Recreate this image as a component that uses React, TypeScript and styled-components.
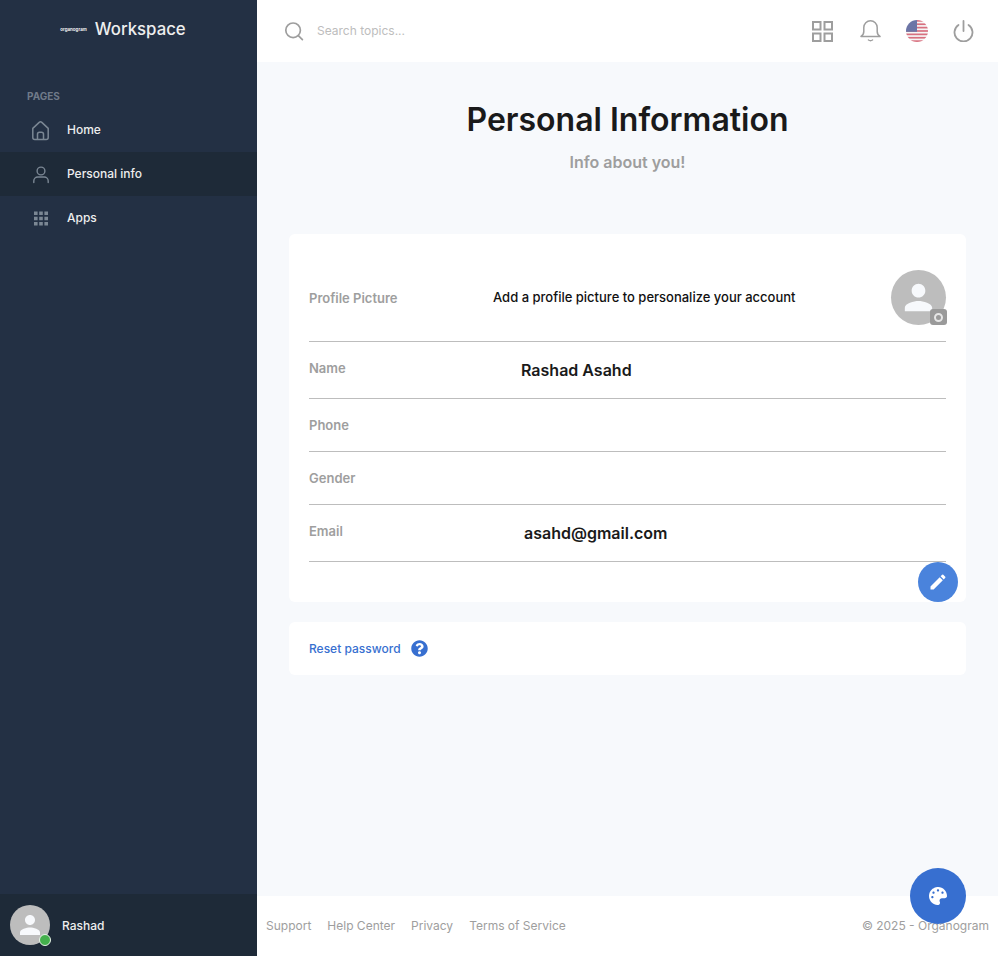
import styled, { createGlobalStyle } from "styled-components";
import { FaPalette, FaQuestionCircle } from "react-icons/fa";

const personPath =
  "M12 12c2.21 0 4-1.79 4-4s-1.79-4-4-4-4 1.79-4 4 1.79 4 4 4zm0 2c-2.67 0-8 1.34-8 4v2h16v-2c0-2.66-5.33-4-8-4z";
const editPath =
  "M3 17.25V21h3.75L17.81 9.94l-3.75-3.75L3 17.25zM20.71 7.04c.39-.39.39-1.02 0-1.41l-2.34-2.34a.9959.9959 0 0 0-1.41 0l-1.83 1.83 3.75 3.75 1.83-1.83z";

const GlobalStyle = createGlobalStyle`
  html, body {
    margin: 0;
    padding: 0;
    height: 100%;
    font-family: Inter, "Liberation Sans", sans-serif;
  }
  #root {
    height: 100%;
  }
`;

const Shell = styled.div`
  display: flex;
  height: 956px;
  overflow: hidden;
  position: relative;
  background: #f7f9fc;
`;

const Sidebar = styled.aside`
  width: 257px;
  flex-shrink: 0;
  display: flex;
  flex-direction: column;
  background: #233044;
  color: #eeeeee;
`;

const Brand = styled.div`
  height: 57px;
  display: flex;
  align-items: center;
  justify-content: center;
  gap: 8px;
  padding-right: 11px;
`;

const BrandMark = styled.span`
  font-size: 4.5px;
  font-weight: 600;
  color: #ffffff;
  white-space: nowrap;
  margin-top: 2px;
`;

const BrandName = styled.span`
  font-size: 16.8px;
  font-weight: 500;
  color: #eeeeee;
`;

const NavSection = styled.nav`
  flex: 1;
  padding-top: 33px;
`;

const NavLabel = styled.div`
  font-size: 10px;
  font-weight: 700;
  line-height: 12px;
  color: #6f7a89;
  padding: 0 27px;
  margin-bottom: 6px;
`;

const NavItem = styled.a<{ $active?: boolean }>`
  height: 44px;
  display: flex;
  align-items: center;
  gap: 16px;
  padding-left: 30px;
  font-size: 12px;
  font-weight: 500;
  color: #eeeeee;
  background: ${({ $active }) => ($active ? "#1e2a38" : "transparent")};

  svg {
    flex-shrink: 0;
    color: #7b8794;
  }
`;

const NavText = styled.span`
  margin-bottom: 2px;
`;

const UserBar = styled.div`
  height: 62px;
  display: flex;
  align-items: center;
  gap: 12px;
  padding-left: 10px;
  background: #1e2a38;
  font-size: 12px;
  font-weight: 500;
`;

const Avatar = styled.div<{ $size: number }>`
  position: relative;
  width: ${({ $size }) => $size}px;
  height: ${({ $size }) => $size}px;
  flex-shrink: 0;
  border-radius: 50%;
  background: #bdbdbd;
  display: flex;
  align-items: center;
  justify-content: center;
  color: #f7f9fc;
`;

const StatusDot = styled.span`
  position: absolute;
  right: -1px;
  bottom: -1px;
  width: 10px;
  height: 10px;
  border-radius: 50%;
  background: #44b04c;
  border: 1px solid #e8f3e8;
`;

const CameraBadge = styled.span`
  position: absolute;
  right: -1px;
  bottom: 0;
  width: 17px;
  height: 16px;
  border-radius: 3px;
  background: #9a9a9a;
  display: flex;
  align-items: center;
  justify-content: center;
`;

const CameraLens = styled.span`
  width: 9px;
  height: 9px;
  border-radius: 50%;
  border: 2px solid #e6e6e6;
  box-sizing: border-box;
`;

const Main = styled.div`
  flex: 1;
  min-width: 0;
  display: flex;
  flex-direction: column;
`;

const Header = styled.header`
  height: 62px;
  flex-shrink: 0;
  display: flex;
  align-items: center;
  background: #ffffff;
  padding: 0 12px 0 27px;
`;

const SearchBox = styled.div`
  flex: 1;
  display: flex;
  align-items: center;
  gap: 12px;
  font-size: 12px;
  color: #bdbdbd;
  svg {
    color: #9e9e9e;
  }
`;

const SearchText = styled.span`
  margin-bottom: 2px;
`;

const HeaderIcons = styled.div`
  display: flex;
  align-items: center;
  color: #9e9e9e;
`;

const HeaderSlot = styled.span<{ $width: number }>`
  width: ${({ $width }) => $width}px;
  display: flex;
  justify-content: center;
`;

const Content = styled.main`
  flex: 1;
  padding: 38px 32px 0;
`;

const PageTitle = styled.h1`
  margin: 0;
  text-align: center;
  font-size: 32px;
  line-height: 39px;
  font-weight: 600;
  color: #1a1a1a;
`;

const PageSubtitle = styled.p`
  margin: 13px 0 62px;
  text-align: center;
  font-size: 16px;
  line-height: 20px;
  font-weight: 600;
  color: #9e9e9e;
`;

const InfoCard = styled.section`
  position: relative;
  background: #ffffff;
  border-radius: 6px;
  padding: 36px 20px 40px;
`;

const Row = styled.div<{ $picture?: boolean }>`
  display: flex;
  align-items: ${({ $picture }) => ($picture ? "center" : "flex-start")};
  padding: ${({ $picture }) => ($picture ? "0 0 16px" : "17px 0")};
  border-bottom: 1px solid #bdbdbd;
`;

const RowLabel = styled.div`
  width: 184px;
  flex-shrink: 0;
  font-size: 13px;
  line-height: 18px;
  font-weight: 600;
  color: #9e9e9e;
`;

const Hint = styled.div`
  flex: 1;
  font-size: 13px;
  font-weight: 500;
  color: #111111;
  margin-top: -2px;
`;

const RowValue = styled.div<{ $indent: number }>`
  padding-left: ${({ $indent }) => $indent}px;
  font-size: 16px;
  line-height: 22px;
  font-weight: 600;
  color: #1a1a1a;
`;

const EditButton = styled.button`
  position: absolute;
  right: 8px;
  bottom: 0;
  width: 40px;
  height: 40px;
  padding: 0;
  border: 0;
  border-radius: 50%;
  background: #4a83dc;
  color: #ffffff;
  display: flex;
  align-items: center;
  justify-content: center;
`;

const ResetCard = styled.section`
  margin-top: 20px;
  height: 53px;
  display: flex;
  align-items: center;
  gap: 10px;
  padding: 0 20px;
  background: #ffffff;
  border-radius: 6px;
  color: #376fd0;
`;

const ResetLink = styled.a`
  font-size: 12px;
  font-weight: 500;
  color: #376fd0;
`;

const Footer = styled.footer`
  height: 60px;
  box-sizing: border-box;
  flex-shrink: 0;
  display: flex;
  align-items: center;
  justify-content: space-between;
  padding: 0 9px 2px;
  background: #ffffff;
  font-size: 12px;
  color: #9e9e9e;
`;

const FooterLinks = styled.div`
  display: flex;
  gap: 16px;
`;

const ThemeButton = styled.button`
  position: absolute;
  right: 32px;
  bottom: 32px;
  width: 56px;
  height: 56px;
  padding: 0;
  border: 0;
  border-radius: 50%;
  background: #376fd0;
  color: #ffffff;
  display: flex;
  align-items: center;
  justify-content: center;
`;

function PersonIcon({ size }: { size: number }) {
  return (
    <svg width={size} height={size} viewBox="0 0 24 24" fill="currentColor">
      <path d={personPath} />
    </svg>
  );
}

function Flag() {
  const stripes = [0, 1, 2, 3, 4, 5, 6];
  return (
    <svg width="22" height="22" viewBox="0 0 22 22">
      <defs>
        <clipPath id="flag-clip">
          <circle cx="11" cy="11" r="11" />
        </clipPath>
      </defs>
      <g clipPath="url(#flag-clip)" opacity="0.7">
        <rect width="22" height="22" fill="#f2f2f2" />
        {stripes.map((s) => (
          <rect key={s} y={s * 3.38} width="22" height="1.69" fill="#c8344a" />
        ))}
        <rect width="11" height="11.8" fill="#2e3b80" />
      </g>
    </svg>
  );
}

export default function App() {
  return (
    <>
      <GlobalStyle />
      <Shell>
        <Sidebar>
          <Brand>
            <BrandMark>organogram</BrandMark>
            <BrandName>Workspace</BrandName>
          </Brand>
          <NavSection>
            <NavLabel>PAGES</NavLabel>
            <NavItem>
              <svg width="21" height="21" viewBox="0 0 21 21" fill="none" stroke="currentColor" strokeWidth="1.5" strokeLinejoin="round">
                <path d="M2.8 8.4 9.2 2.4a2 2 0 0 1 2.6 0l6.4 6V17.4a2 2 0 0 1-2 2H4.8a2 2 0 0 1-2-2z" />
                <path d="M7.5 19.4v-5.2a2 2 0 0 1 2-2h2a2 2 0 0 1 2 2v5.2" />
              </svg>
              <NavText>Home</NavText>
            </NavItem>
            <NavItem $active>
              <svg width="21" height="21" viewBox="0 0 21 21" fill="none" stroke="currentColor" strokeWidth="1.4" strokeLinecap="round">
                <circle cx="11" cy="7" r="3.9" />
                <path d="M3.8 18.5v-1.5a4 4 0 0 1 4-4h6.4a4 4 0 0 1 4 4v1.5" />
              </svg>
              <NavText>Personal info</NavText>
            </NavItem>
            <NavItem>
              <svg width="21" height="21" viewBox="0 0 21 21" fill="currentColor">
                <path d="M4 3.5h3.6v3.6H4zM9.2 3.5h3.6v3.6H9.2zM14.4 3.5h3.6v3.6h-3.6zM4 8.7h3.6v3.6H4zM9.2 8.7h3.6v3.6H9.2zM14.4 8.7h3.6v3.6h-3.6zM4 13.9h3.6v3.6H4zM9.2 13.9h3.6v3.6H9.2zM14.4 13.9h3.6v3.6h-3.6z" />
              </svg>
              <NavText>Apps</NavText>
            </NavItem>
          </NavSection>
          <UserBar>
            <Avatar $size={40}>
              <PersonIcon size={30} />
              <StatusDot />
            </Avatar>
            Rashad
          </UserBar>
        </Sidebar>

        <Main>
          <Header>
            <SearchBox>
              <svg width="21" height="21" viewBox="0 0 21 21" fill="none" stroke="currentColor" strokeWidth="1.7" strokeLinecap="round">
                <circle cx="9.1" cy="9.3" r="7.3" />
                <path d="m14.6 14.8 3.8 3.9" />
              </svg>
              <SearchText>Search topics...</SearchText>
            </SearchBox>
            <HeaderIcons>
              <HeaderSlot $width={48}>
                <svg width="21" height="21" viewBox="0 0 21 21" fill="none" stroke="currentColor" strokeWidth="2">
                  <rect x="1" y="1" width="7.5" height="7.5" />
                  <rect x="12.5" y="1" width="7.5" height="7.5" />
                  <rect x="1" y="12.5" width="7.5" height="7.5" />
                  <rect x="12.5" y="12.5" width="7.5" height="7.5" />
                </svg>
              </HeaderSlot>
              <HeaderSlot $width={48}>
                <svg width="21" height="22" viewBox="0 0 21 22" fill="none" stroke="currentColor" strokeWidth="1.5" strokeLinecap="round" strokeLinejoin="round">
                  <path d="M1 16.5c1.6-1 2.8-2.4 2.8-5V7.5a6.7 6.7 0 0 1 13.4 0v4c0 2.6 1.2 4 2.8 5z" />
                  <path d="M8.5 20c1.2.8 2.8.8 4 0" />
                </svg>
              </HeaderSlot>
              <HeaderSlot $width={46}>
                <Flag />
              </HeaderSlot>
              <HeaderSlot $width={46}>
                <svg width="21" height="22" viewBox="0 0 21 22" fill="none" stroke="currentColor" strokeWidth="1.8" strokeLinecap="round">
                  <path d="M10.5 1v10" />
                  <path d="M15.5 5a9 9 0 1 1-10 0" />
                </svg>
              </HeaderSlot>
            </HeaderIcons>
          </Header>

          <Content>
            <PageTitle>Personal Information</PageTitle>
            <PageSubtitle>Info about you!</PageSubtitle>

            <InfoCard>
              <Row $picture>
                <RowLabel>Profile Picture</RowLabel>
                <Hint>Add a profile picture to personalize your account</Hint>
                <Avatar $size={55}>
                  <PersonIcon size={41} />
                  <CameraBadge>
                    <CameraLens />
                  </CameraBadge>
                </Avatar>
              </Row>
              <Row>
                <RowLabel>Name</RowLabel>
                <RowValue $indent={28}>Rashad Asahd</RowValue>
              </Row>
              <Row>
                <RowLabel>Phone</RowLabel>
              </Row>
              <Row>
                <RowLabel>Gender</RowLabel>
              </Row>
              <Row>
                <RowLabel>Email</RowLabel>
                <RowValue $indent={31}>asahd@gmail.com</RowValue>
              </Row>
              <EditButton aria-label="Edit">
                <svg width="20" height="20" viewBox="0 0 24 24" fill="currentColor">
                  <path d={editPath} />
                </svg>
              </EditButton>
            </InfoCard>

            <ResetCard>
              <ResetLink>Reset password</ResetLink>
              <FaQuestionCircle size={17} />
            </ResetCard>
          </Content>

          <Footer>
            <FooterLinks>
              <span>Support</span>
              <span>Help Center</span>
              <span>Privacy</span>
              <span>Terms of Service</span>
            </FooterLinks>
            <span>© 2025 - Organogram</span>
          </Footer>
        </Main>

        <ThemeButton aria-label="Theme">
          <FaPalette size={18} />
        </ThemeButton>
      </Shell>
    </>
  );
}
